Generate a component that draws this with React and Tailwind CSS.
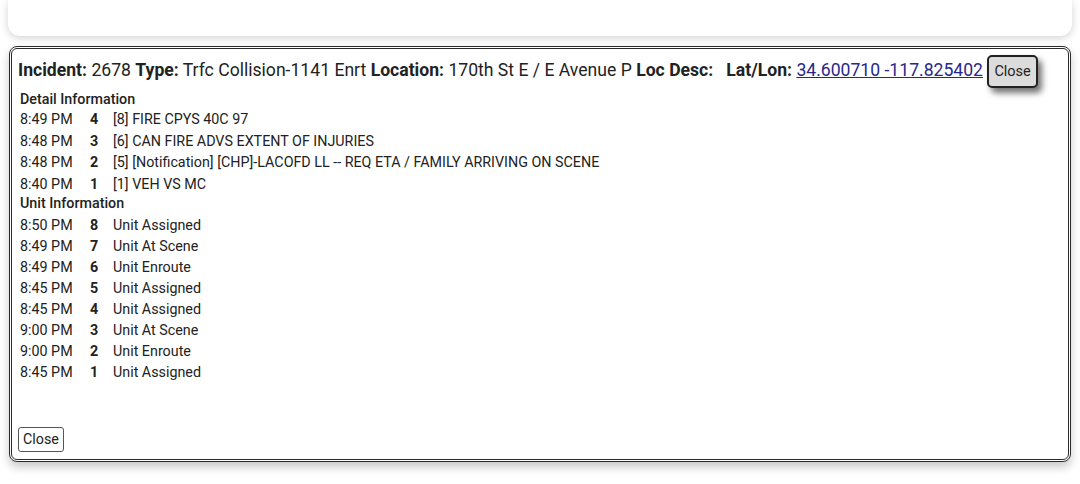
import React from 'react';

const details = [
  ['8:49 PM', '4', '[8] FIRE CPYS 40C 97'],
  ['8:48 PM', '3', '[6] CAN FIRE ADVS EXTENT OF INJURIES'],
  ['8:48 PM', '2', '[5] [Notification] [CHP]-LACOFD LL -- REQ ETA / FAMILY ARRIVING ON SCENE'],
  ['8:40 PM', '1', '[1] VEH VS MC'],
];

const units = [
  ['8:50 PM', '8', 'Unit Assigned'],
  ['8:49 PM', '7', 'Unit At Scene'],
  ['8:49 PM', '6', 'Unit Enroute'],
  ['8:45 PM', '5', 'Unit Assigned'],
  ['8:45 PM', '4', 'Unit Assigned'],
  ['9:00 PM', '3', 'Unit At Scene'],
  ['9:00 PM', '2', 'Unit Enroute'],
  ['8:45 PM', '1', 'Unit Assigned'],
];

function Rows({ items, className }) {
  return (
    <div className={`grid grid-cols-[70px_23px_1fr] ${className}`}>
      {items.map(([t, n, d], i) => (
        <React.Fragment key={i}>
          <div>{t}</div>
          <div className="font-bold">{n}</div>
          <div>{d}</div>
        </React.Fragment>
      ))}
    </div>
  );
}

export default function App() {
  return (
    <div className="w-[1080px] h-[484px] bg-white overflow-hidden text-[#222]" style={{ fontFamily: 'Roboto, "Liberation Sans", sans-serif' }}>
      {/* top card */}
      <div className="mx-[8px] h-[36px] bg-white rounded-b-xl shadow-[0_2px_8px_rgba(0,0,0,0.18)]" />

      {/* modal */}
      <div className="mx-[9px] mt-[10px] h-[416px] border-[3px] border-double border-[#2a2a2a] rounded-lg bg-white shadow-[0_5px_10px_rgba(0,0,0,0.22)] flex flex-col pl-[6px] pt-[6px] pb-[7px]">
        <div className="text-[17.6px] leading-[24px] whitespace-nowrap">
          <b className="font-bold">Incident:</b> 2678 <b>Type:</b> Trfc Collision-1141 Enrt <b>Location:</b> 170th St E / E Avenue P <b>Loc Desc:</b>&nbsp;&nbsp; <b>Lat/Lon:</b>{' '}
          <a href="#" className="underline text-[#28288a]">34.600710 -117.825402</a>{' '}
          <button className="align-middle text-[14.5px] px-[5px] h-[33px] bg-[#dcdcdc] border-2 border-[#222] rounded-[5px] shadow-[4px_5px_6px_rgba(0,0,0,0.55)]">Close</button>
        </div>
        <div className="text-[14.3px] pl-[2px] mt-[1px]">
          <div className="font-medium leading-[20px]">Detail Information</div>
          <Rows items={details} className="leading-[21.6px]" />
          <div className="font-medium leading-[16px] mb-[4px]">Unit Information</div>
          <Rows items={units} className="leading-[20.9px]" />
        </div>
        <div className="mt-auto">
          <button className="text-[14.3px] px-[4px] h-[25px] bg-white border border-[#555] rounded-[3px]">Close</button>
        </div>
      </div>
    </div>
  );
}
